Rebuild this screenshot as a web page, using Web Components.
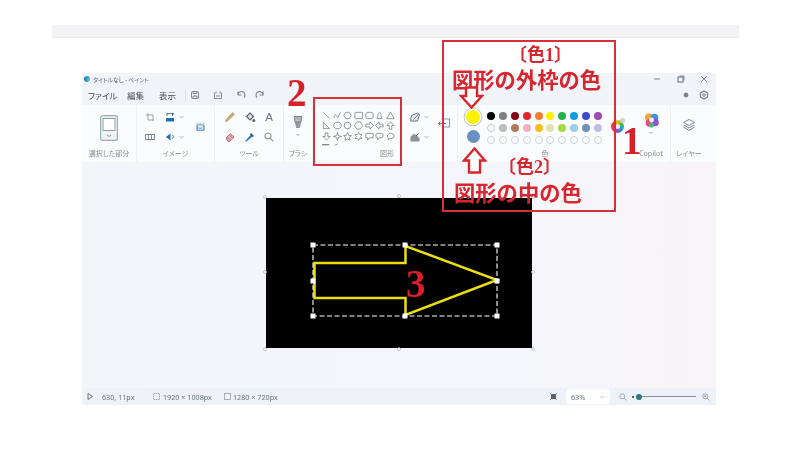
<!DOCTYPE html>
<html lang="ja">
<head>
<meta charset="utf-8">
<title>ペイント</title>
<style>
html,body{margin:0;padding:0;background:#fff;}
body{width:800px;height:450px;overflow:hidden;position:relative;font-family:"Noto Sans CJK JP","Noto Sans",sans-serif;}
</style>
</head>
<body>
<top-strip></top-strip>
<paint-window></paint-window>
<note-layer></note-layer>
<script>
const ICONS={
crop:'<path d="M5 3v7h6M3 5h7v6" fill="none" stroke="#9aa3ab" stroke-width="1"/>',
rotate:'<path d="M3 8h8v3.500H3z" fill="#1f6fb5"/><path d="M4 6V3.500h5.500V6" fill="none" stroke="#5d7a93" stroke-width="1.100"/><path d="M9 2.500l2.500 1.500L9 5.500z" fill="#1f6fb5"/>',
resize:'<path d="M2.500 4.500h9v5h-9z" fill="none" stroke="#7c8791" stroke-width="1.100"/><path d="M5.500 4.500v5M8.500 4.500v5" stroke="#7c8791" stroke-width=".9"/>',
flip:'<path d="M7.500 3.500v7L3 7z" fill="#1f6fb5"/><path d="M9 5l2 2-2 2" fill="none" stroke="#8ea0b0" stroke-width="1.100"/>',
image:'<path d="M1 1h2.500M5.500 1H8M10 1h3M1 13V4M13 4v9" fill="none" stroke="#6f91b4" stroke-width="1.100"/><rect x="2.500" y="3.500" width="9" height="9" fill="#cbe1f5" stroke="#4a8cc6" stroke-width="1.100"/><path d="M3.500 11.500l3-3 3 3" fill="none" stroke="#4a8cc6"/>',
pencil:'<path d="M3.500 11.500l-1 0 .7-2 6.300-7 2 2-7 6.500z" fill="#c9ad74" stroke="#ad9158" stroke-width=".6"/>',
fill:'<path d="M3.500 6.500l3.500-3.500 3.500 3.500-3.500 3.500z" fill="#dfe3e8" stroke="#59626a" stroke-width="1.200"/><circle cx="10.800" cy="10.500" r="1.500" fill="#59626a"/>',
text:'<text x="7" y="11" text-anchor="middle" font-family="Liberation Sans" font-size="11.500" fill="#6a747d">A</text>',
eraser:'<path d="M3 8l4.500-4.500 3.500 3.500-4.500 4.500H5z" fill="#dc959c" stroke="#b06a74" stroke-width=".8"/><path d="M5.500 6l3.500 3.500" stroke="#f5e6e8" stroke-width=".7"/>',
picker:'<path d="M3.500 11.500l-1 0 0-1 5.500-6 1.800 1.800z" fill="#2b7cc8"/><path d="M8 3l3 3-1.500 1-2.500-2.500z" fill="#475159"/>',
zoom:'<circle cx="6" cy="6" r="3" fill="none" stroke="#8a949d" stroke-width="1.100"/><path d="M8.300 8.300l3 3" stroke="#8a949d" stroke-width="1.100"/>',
brush:'<path d="M3 1.500h8l-1 5.500H4z" fill="#d0d5d9" stroke="#707880" stroke-width=".9"/><path d="M5 1.500v4M7 1.500v4M9 1.500v4" stroke="#707880" stroke-width=".7"/><path d="M4.500 7h5l-1 5.500h-3z" fill="#98a0a6" stroke="#707880" stroke-width=".7"/>',
outline:'<path d="M2.500 11l1-5.500 6-2.500 2 1.500-2 6.500z" fill="#e9edf2" stroke="#6a757f"/><path d="M5.500 9.500l5.500-6" stroke="#6a757f"/>',
shapefill:'<path d="M2.500 11.500V7l3.500-3.500 5.500 4.500v3.500z" fill="#8b949c"/><path d="M8 6l2.500-2.500" stroke="#667"/>',
send:'<path d="M4.500 2h8v8h-8" fill="none" stroke="#7aa2c9" stroke-width="1.100"/><path d="M9 6.500H1.500M3.500 4.500l-2 2 2 2" fill="none" stroke="#6b7883"/>'
};
const SHAPES=[
'<path d="M1.500 1.500l7 7"/>','<path d="M1 8c2-7 3-3 4-1s2-6 4-5"/>','<path d="M3 1.500h4L9 5 7 8.500H3L1 5z"/>','<rect x="1" y="1.500" width="8.500" height="7" rx=".6"/>','<rect x="1" y="1.500" width="8" height="7" rx="2"/>','<path d="M2 8.500c1-1 1-2 1.500-5C4 1 6 1 6.500 3.500c.5 3 .5 4 1.500 5z"/>','<path d="M5 1.200l4 7.300H1z"/>',
'<path d="M1.500 1.500v7h7z"/>','<path d="M3 1.500h4l2 2v3l-2 2H3l-2-2v-3z"/>','<circle cx="5" cy="5" r="3.700"/>','<path d="M3 1h4l2.500 4L7 9H3L.5 5z"/>','<path d="M1 3.500h4.500V1L9.500 5 5.500 9V6.500H1z"/>','<path d="M9 3.500H4.500V1L.5 5l4 4V6.500H9z"/>','<path d="M3.500 9V5H1l4-4 4 4H6.500v4z"/>',
'<path d="M3.500 1v4H1l4 4 4-4H6.500V1z"/>','<path d="M5 .5l1 3.500 3.500 1-3.500 1-1 3.500-1-3.500L.5 5 4 4z"/>','<path d="M5 .8l1.300 2.900 3.100.3-2.300 2.100.7 3.100L5 7.600 2.200 9.200l.7-3.100L.6 4l3.100-.3z"/>','<path d="M5 .6l1.200 2.200 2.600-.1-1.400 2.300 1.400 2.200-2.600 0L5 9.400 3.800 7.200l-2.600 0 1.400-2.200L1.200 2.700l2.600.1z"/>','<path d="M1 1.500h8v5H4.500L3 9V6.500H1z"/>','<path d="M3 1.500h4a2 2 0 012 2v1a2 2 0 01-2 2H4.500L3 9V6.500a2 2 0 01-2-2v-1a2 2 0 012-2z"/>','<path d="M3 2.500C4 1 6 1 7 2.200c2 0 2.500 2.300 1.300 3.300C8 7.500 5.500 7.800 4 7L2.500 9V6.500C1 6 1 3 3 2.500z"/>',
'<path d="M0 3h8" stroke-width="1.300"/>','<path d="M2 3.500l3-1"/>'
];
class Base extends HTMLElement{
  constructor(){super();this.attachShadow({mode:'open'});}
  render(html){this.shadowRoot.innerHTML=html;}
}
class TopStrip extends Base{connectedCallback(){this.render(`<style>:host{display:block;height:13px;margin:25px 61px 0 52px;background:#f3f3f5;border-bottom:1px solid #eaeaee;box-sizing:border-box;filter:blur(.4px)}</style>`);}}
class RbIcon extends Base{connectedCallback(){
  const n=this.getAttribute('name'),s=this.getAttribute('size')||14,ch=this.hasAttribute('chevron');
  this.render(`<style>:host{display:inline-flex;align-items:center;line-height:0}svg{display:block}.c{width:8px;height:14px}</style>
  <svg width="${s}" height="${s}" viewBox="0 0 14 14">${ICONS[n]||''}</svg>${ch?'<svg class="c" viewBox="0 0 8 14"><path d="M2.500 6l2 2 2-2" fill="none" stroke="#a8b0b7" stroke-width=".9"/></svg>':''}`);
}}
class RbGroup extends Base{connectedCallback(){
  const w=this.getAttribute('w'),pad=this.getAttribute('pad')||0,div=this.hasAttribute('nodiv')?'none':'1px solid #edf0f5',
  al=this.getAttribute('align')||'center',pr=this.getAttribute('pr')||0,pt=this.getAttribute('pt')||5;
  this.render(`<style>:host{display:grid;grid-template-rows:43px 10px;width:${w}px;box-sizing:border-box;border-right:${div};padding-bottom:4px;flex:none}
  .c{padding:${pt}px 0 0 ${pad}px;overflow:hidden;box-sizing:border-box;height:43px}
  .l{font-size:7px;line-height:10px;color:#858c94;text-align:${al};padding-right:${pr}px;white-space:nowrap}</style>
  <div class="c"><slot></slot></div><div class="l">${this.getAttribute('label')||''}</div>`);
}}
class ShapeGrid extends Base{connectedCallback(){
  this.render(`<style>:host{display:grid;grid-template-columns:repeat(7,10.7px);grid-auto-rows:10.3px;justify-items:center}svg{width:9px;height:9px;fill:none;stroke:#6d767e;stroke-width:.8}</style>`+SHAPES.map(p=>`<svg viewBox="0 0 10 10">${p}</svg>`).join(''));
}}
class ColorPanel extends Base{connectedCallback(){
  const a=['#000','#7f7f7f','#880015','#e0242b','#f08030','#fff000','#22b14c','#0f9be0','#3f48cc','#9d4bb0','#fff','#bdbdbd','#ad7a5d','#f2aec6','#f9bd1f','#e8deb0','#a6d93a','#98cfe6','#7390bb','#c3bbe0'];
  const dots=a.map((c,i)=>`<i style="background:${c}${i==10?';border:1px solid #c4c9cf':''}"></i>`).join('')+Array(10).fill('<i style="border:1px solid #cdd2d8"></i>').join('');
  this.render(`<style>:host{display:flex}
  .big{width:14px;margin-right:7px;display:flex;flex-direction:column;align-items:center;margin-top:-2px}
  .y{width:14px;height:14px;border-radius:50%;background:#fff200;box-shadow:0 0 0 1.500px #fff,0 0 0 2.300px #b8bcc0;margin-top:1px}
  .b{width:13px;height:13px;border-radius:50%;background:#6a8fc2;margin-top:5.500px}
  .g{display:grid;grid-template-columns:repeat(10,8px);grid-auto-rows:8px;gap:4px 3.900px;margin-top:1px}
  i{display:block;border-radius:50%;box-sizing:border-box}
  .r{width:13px;height:13px;border-radius:50%;margin:9px 0 0 9px;background:conic-gradient(#f2c400,#45b549,#1ea0e6,#8c4fc6,#e8327a,#e8322c,#f2c400);position:relative}
  .r::before{content:"";position:absolute;inset:4px;border-radius:50%;background:#f4e9ea}
  .r::after{content:"";position:absolute;left:9px;top:-2px;width:5px;height:5px;border-radius:50%;background:#cfd3d6}
  </style><div class="big"><div class="y"></div><div class="b"></div></div><div class="g">${dots}</div><div class="r"></div>`);
}}
class PaintRibbon extends Base{connectedCallback(){
  this.render(`<style>:host{display:flex;height:57px;background:#fbfcfe;flex:none}
  .tools{display:grid;grid-template-columns:repeat(3,14px);column-gap:5.500px;row-gap:6px}
  .img{display:grid;grid-template-columns:14px 22px 14px;column-gap:6px;row-gap:6px}
  .img rb-icon:last-child{grid-area:1/3/3/4;align-self:center;margin-left:5px}
  .col{display:flex;flex-direction:column;align-items:center}
  .stack{display:flex;flex-direction:column;gap:6px}
  .send{margin:-27px 0 0 29px;display:block;width:14px}
  .cp{display:block;margin:3px auto 0}
  .chev{display:block;margin:1px auto 0}
  </style>
  <rb-group w="55" label="選択した部分" pad="18"><svg width="18" height="26" viewBox="0 0 18 26" style="display:block;margin-top:5px"><rect x=".6" y=".6" width="16.800" height="24.800" rx="2" fill="#eef3f2" stroke="#9db1ac" stroke-width="1.200"/><rect x="3" y="3.500" width="12" height="12" fill="#fff" stroke="#7d888e" stroke-width=".8"/><path d="M7 20l2 1.500L11 20" fill="none" stroke="#8b949b"/></svg></rb-group>
  <rb-group w="78" label="イメージ" pad="6"><div class="img"><rb-icon name="crop"></rb-icon><rb-icon name="rotate" chevron></rb-icon><rb-icon name="resize"></rb-icon><rb-icon name="flip" chevron></rb-icon><rb-icon name="image"></rb-icon></div></rb-group>
  <rb-group w="69" label="ツール" pad="8"><div class="tools"><rb-icon name="pencil"></rb-icon><rb-icon name="fill"></rb-icon><rb-icon name="text"></rb-icon><rb-icon name="eraser"></rb-icon><rb-icon name="picker"></rb-icon><rb-icon name="zoom"></rb-icon></div></rb-group>
  <rb-group w="29" label="ブラシ" pt="10"><div class="col"><rb-icon name="brush"></rb-icon><svg width="8" height="6" style="margin-top:3px" viewBox="0 0 8 6"><path d="M2.500 2l1.500 1.500L5.500 2" fill="none" stroke="#9aa2a9"/></svg></div></rb-group>
  <rb-group w="89" label="図形" pad="8" pt="6" align="right" nodiv pr="8"><shape-grid></shape-grid></rb-group>
  <rb-group w="56" pad="6"><div class="stack"><rb-icon name="outline" chevron></rb-icon><rb-icon name="shapefill" chevron></rb-icon></div><rb-icon class="send" name="send"></rb-icon></rb-group>
  <rb-group w="174" label="色" pad="8" pt="6" nodiv><color-panel></color-panel></rb-group>
  <rb-group w="39" label="Copilot" pt="4"><svg class="cp" width="17" height="17" viewBox="0 0 17 17"><circle cx="6" cy="5.500" r="4" fill="#f2a03a"/><circle cx="11.500" cy="5.500" r="3.800" fill="#3d8fe0"/><circle cx="12" cy="10.500" r="3.800" fill="#8a55cf"/><circle cx="6.500" cy="11" r="3.800" fill="#e5487f"/><circle cx="8.500" cy="13" r="2.600" fill="#42bb8a"/><circle cx="8.500" cy="8" r="2.400" fill="#f8f6f2"/></svg><svg width="8" height="6" class="chev" viewBox="0 0 8 6"><path d="M2.500 2l1.500 1.500L5.500 2" fill="none" stroke="#9aa2a9"/></svg></rb-group>
  <rb-group w="36" label="レイヤー" pad="10" pt="13" nodiv><svg width="16" height="14" viewBox="0 0 16 14" style="display:block"><path d="M8 1.500l5.500 3L8 7.500l-5.500-3zM2.500 7l5.500 3 5.500-3M2.500 9l5.500 3.500L13.500 9" fill="none" stroke="#7a858e" stroke-width="1" stroke-linejoin="round"/></svg></rb-group>`);
}}
class PaintCanvas extends Base{connectedCallback(){
  const h=(x,y,s=4)=>`<rect x="${x-s/2}" y="${y-s/2}" width="${s}" height="${s}" fill="#fff"/>`;
  const g=(x,y)=>`<circle cx="${x}" cy="${y}" r="1.500" fill="#fff" stroke="#9aa2aa" stroke-width=".6"/>`;
  this.render(`<style>:host{display:block;flex:1;background:linear-gradient(90deg,#f3f5fb 0%,#f5f6fb 70%,#f8f4f7 100%);padding:36px 0 0 184px;box-sizing:border-box;overflow:hidden}svg{display:block;overflow:visible}</style>
  <svg width="266" height="150" viewBox="266 198 266 150">
    <rect x="266" y="198" width="266" height="150" fill="#000"/>
    ${g(265,197)}${g(399,196)}${g(533,197)}${g(265,272)}${g(533,272)}${g(265,349)}${g(399,349)}${g(533,349)}
    <path d="M314.500 263H405.500V246L497 280 405.500 315V298H314.500Z" fill="none" stroke="#ebdf10" stroke-width="2.500"/>
    <rect x="313" y="245" width="184" height="71" fill="none" stroke="#fff" stroke-width="1.100" stroke-dasharray="5 2.500"/>
    ${h(313,245,5)}${h(405,245,5)}${h(497,245,5)}${h(313,281,5)}${h(497,281,5)}${h(313,316,5)}${h(405,316,5)}${h(497,316,5)}
  </svg>`);
}}
class StatusBar extends Base{connectedCallback(){
  this.render(`<style>:host{display:flex;align-items:center;height:17px;flex:none;background:#eef2f8;font-size:7.200px;color:#6a727a;font-family:"Noto Sans",sans-serif;white-space:nowrap}
  svg{display:block;flex:none}.a{margin-left:5px}.t{margin-left:4px}
  .sp{flex:1}
  .dd{width:44px;height:15px;background:#fff;border-radius:2px;display:flex;align-items:center;justify-content:space-between;padding:0 5px;box-sizing:border-box;margin:0 9px 0 9px}
  .sl{width:64px;height:6px;margin-left:5px;position:relative;flex:none}
  .sl::before{content:"";position:absolute;left:4px;right:0;top:2.300px;height:1.200px;background:#8a929a}
  .sl b{position:absolute;left:4px;top:0;width:6px;height:6px;border-radius:50%;background:#2b7a78}
  .sl u{position:absolute;left:0;top:2px;width:2px;height:2px;background:#59626a}
  </style>
  <svg class="a" width="6" height="7" viewBox="0 0 6 7"><path d="M1 .5v6l4.500-3z" fill="none" stroke="#6a727a"/></svg><span class="t" style="margin-left:9px;width:51px">630, 11px</span>
  <svg width="7" height="7" viewBox="0 0 7 7"><rect x=".5" y=".5" width="6" height="6" fill="none" stroke="#8c949c" stroke-width=".7" stroke-dasharray="1.500 .5"/></svg><span class="t" style="margin-left:3px;width:61px">1920 × 1008px</span>
  <svg width="7" height="7" viewBox="0 0 7 7"><rect x=".5" y=".5" width="6" height="6" fill="none" stroke="#8c949c" stroke-width=".7"/></svg><span class="t" style="margin-left:2px">1280 × 720px</span>
  <span class="sp"></span>
  <svg width="7" height="7" viewBox="0 0 7 7"><path d="M1 1h5v5H1z" fill="#59626a"/><path d="M0 0l2 2M7 0L5 2M0 7l2-2M7 7L5 5" stroke="#59626a" stroke-width=".6"/></svg>
  <div class="dd"><span>63%</span><svg width="6" height="4" viewBox="0 0 6 4"><path d="M1 1l2 2 2-2" fill="none" stroke="#b0b6bc" stroke-width=".7"/></svg></div>
  <svg width="8" height="8" viewBox="0 0 8 8"><circle cx="3.300" cy="3.300" r="2.500" fill="none" stroke="#8a949d" stroke-width=".8"/><path d="M5.200 5.200L7.500 7.500" stroke="#8a949d" stroke-width=".8"/></svg>
  <div class="sl"><u></u><b></b></div>
  <svg width="8" height="8" viewBox="0 0 8 8" style="margin:0 6px 0 6px"><circle cx="3.300" cy="3.300" r="2.500" fill="none" stroke="#8a949d" stroke-width=".8"/><path d="M5.200 5.200L7.500 7.500M2 3.300h2.600M3.300 2v2.600" stroke="#8a949d" stroke-width=".7"/></svg>`);
}}
class PaintWindow extends Base{connectedCallback(){
  const top=(p)=>`<svg width="10" height="10" viewBox="0 0 10 10" fill="none" stroke="#767e86" stroke-width=".9">${p}</svg>`;
  this.render(`<style>:host{display:flex;flex-direction:column;width:634px;height:332px;margin:35px 0 0 82px;background:#f1f4f9;filter:blur(.55px);color:#444b52;font-feature-settings:"palt"}
  .title{display:flex;align-items:center;height:12px;flex:none;padding-left:2px;font-size:5.800px;color:#5f676e;gap:3px}
  .logo{width:6px;height:6px;border-radius:50%;background:conic-gradient(#2b9ad6,#58c0a8,#2b7fb8,#2b9ad6)}
  .sp{flex:1}
  .wc{display:flex;align-items:center;gap:13.500px;padding-right:7px}
  .menu{display:flex;align-items:center;height:20px;flex:none;font-size:8.500px;padding:0 6px;color:#4a5158}
  .menu span.m{white-space:nowrap;flex:none}
  .menu svg{display:block;flex:none}
  .rs{display:flex;gap:8px;padding-right:1px}
  </style>
  <div class="title"><span class="logo"></span><span>タイトルなし - ペイント</span><span class="sp"></span>
    <div class="wc">${top('<path d="M2 5h6"/>')}${top('<rect x="2" y="3" width="5" height="5" stroke-width="1.200"/><path d="M3.500 2H8v4.500"/>')}${top('<path d="M2 2l6 6M8 2L2 8"/>')}</div></div>
  <div class="menu"><span class="m" style="width:39px">ファイル</span><span class="m" style="width:32px">編集</span><span class="m" style="width:17px">表示</span>
    <span style="width:1px;height:12px;background:#dde2e8;margin:0 4px 0 9px"></span>
    ${top('<rect x="1.500" y="1.500" width="7" height="7" rx="1"/><path d="M3 1.500v2h4v-2M3 8.500V6h4v2.500"/>')}<span style="width:13px"></span>
    ${top('<path d="M1.500 2.500v6h7v-6M3 1.500v2M7 1.500v2M3 6h4"/>')}<span style="width:13px"></span>
    ${top('<path d="M2 5a3.500 3.500 0 116 2.500M2 1.500V5h3.500" stroke-width="1.100"/>')}<span style="width:9px"></span>
    ${top('<path d="M8 5a3.500 3.500 0 10-6 2.500M8 1.500V5H4.500" stroke-width="1.100"/>')}
    <span class="sp"></span>
    <div class="rs">${top('<circle cx="5" cy="5" r="2" fill="#767e86"/>')}${top('<path d="M5 1l3.500 2v4L5 9 1.500 7V3z" stroke-width="1.200"/><circle cx="5" cy="5" r="1.300"/>')}</div></div>
  <paint-ribbon></paint-ribbon>
  <paint-canvas></paint-canvas>
  <status-bar></status-bar>`);
}}
class NoteLayer extends Base{connectedCallback(){
  const up=(x,y,flip)=>`<svg class="ar" style="left:${x}px;top:${y}px" width="25" height="${flip?23:27}" viewBox="0 0 25 ${flip?23:27}"><path d="${flip?'M7 1.500h11V10h5L12.500 21.500 2 10h5z':'M12.500 1.500L23 13.500h-5v12H7v-12H2z'}" fill="#fff" stroke="#d8262f" stroke-width="2.400"/></svg>`;
  this.render(`<style>:host{position:absolute;inset:0;display:block;filter:blur(.3px);color:#d8262f;font-family:"Noto Sans CJK JP",sans-serif;font-weight:700}
  .box{position:absolute;border:2px solid #d8303a;box-sizing:border-box}
  .t{position:absolute;white-space:nowrap;line-height:1}
  .s{font-family:"Liberation Serif","Noto Sans CJK JP",serif}
  .n{position:absolute;font-family:"Liberation Serif",serif;font-weight:700;line-height:1;font-size:39px;color:#d8202a}
  .ar{position:absolute;display:block}
  </style>
  <div class="box" style="left:442px;top:40px;width:174px;height:172px"></div>
  <div class="box" style="left:313px;top:97px;width:89px;height:69px"></div>
  <span class="t s" style="left:509px;top:46px;font-size:18px">〔色1〕</span>
  <span class="t" style="left:452px;top:68px;font-size:21.300px">図形の外枠の色</span>
  <span class="t s" style="left:498px;top:158px;font-size:18px">〔色2〕</span>
  <span class="t" style="left:454px;top:181px;font-size:21.300px">図形の中の色</span>
  ${up(459,86,true)}${up(462,147,false)}
  <span class="n" style="left:622px;top:121px">1</span>
  <span class="n" style="left:287px;top:73px">2</span>
  <span class="n" style="left:406px;top:264px">3</span>`);
}}
const defs={'top-strip':TopStrip,'rb-icon':RbIcon,'rb-group':RbGroup,'shape-grid':ShapeGrid,'color-panel':ColorPanel,'paint-ribbon':PaintRibbon,'paint-canvas':PaintCanvas,'status-bar':StatusBar,'paint-window':PaintWindow,'note-layer':NoteLayer};
for(const k in defs)customElements.define(k,defs[k]);
</script>
</body>
</html>
